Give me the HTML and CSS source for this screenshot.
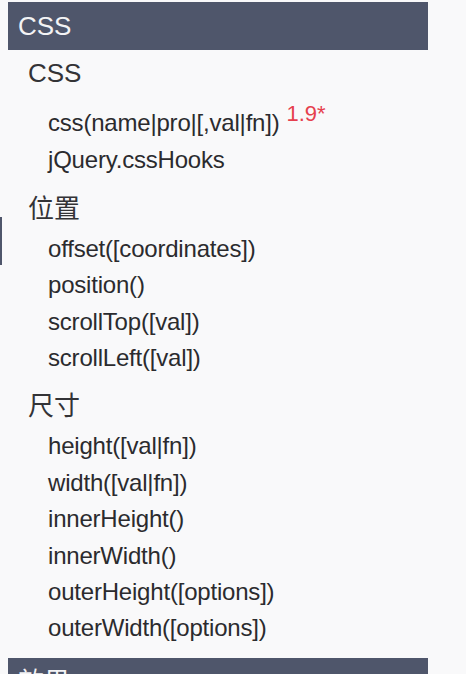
FILE: index.html
```html
<!DOCTYPE html>
<html lang="zh">
<head>
<meta charset="utf-8">
<title>CSS</title>
<link rel="stylesheet" href="styles.css">
</head>
<body>
<div class="marker"></div>
<nav class="sidebar">
  <div class="bar">CSS</div>
  <section class="group">
    <h3 class="heading">CSS</h3>
    <ul class="items">
      <li class="item item-sup">css(name|pro|[,val|fn])<span class="ver">1.9*</span></li>
      <li class="item">jQuery.cssHooks</li>
    </ul>
  </section>
  <section class="group">
    <h3 class="heading">位置</h3>
    <ul class="items">
      <li class="item">offset([coordinates])</li>
      <li class="item">position()</li>
      <li class="item">scrollTop([val])</li>
      <li class="item">scrollLeft([val])</li>
    </ul>
  </section>
  <section class="group">
    <h3 class="heading">尺寸</h3>
    <ul class="items">
      <li class="item">height([val|fn])</li>
      <li class="item">width([val|fn])</li>
      <li class="item">innerHeight()</li>
      <li class="item">innerWidth()</li>
      <li class="item">outerHeight([options])</li>
      <li class="item">outerWidth([options])</li>
    </ul>
  </section>
  <div class="bar bar-next">效果</div>
</nav>
</body>
</html>
```

FILE: styles.css
```css
html, body {
  margin: 0;
  padding: 0;
  background: #f9f9fa;
  height: 100%;
  overflow: hidden;
}
body {
  font-family: "Liberation Sans", "Noto Sans CJK SC", Arial, sans-serif;
  color: #2b2b2e;
  position: relative;
}
.marker {
  position: absolute;
  left: 0;
  top: 217px;
  width: 2px;
  height: 48px;
  background: #4f566b;
}
.sidebar {
  width: 420px;
  padding: 2px 0 0 8px;
}
.bar {
  height: 48px;
  background: #4f566b;
  color: #f3f3f5;
  font-size: 26px;
  line-height: 48px;
  padding-left: 10px;
}
.bar-next {
  margin-top: 11px;
}
.group {
  margin-top: 12px;
}
.sidebar .bar + .group {
  margin-top: 5px;
}
.heading {
  margin: 0;
  padding-left: 20px;
  font-size: 26px;
  font-weight: normal;
  line-height: 36px;
  color: #333336;
}
.items {
  list-style: none;
  margin: 4px 0 0;
  padding: 0 0 0 40px;
}
.item {
  font-size: 24px;
  line-height: 36.4px;
  letter-spacing: -0.2px;
  white-space: nowrap;
}
.item-sup {
  padding-top: 10px;
}
.ver {
  font-size: 22px;
  color: #e6404e;
  margin-left: 7px;
  position: relative;
  top: -10px;
  letter-spacing: 0;
}
```
